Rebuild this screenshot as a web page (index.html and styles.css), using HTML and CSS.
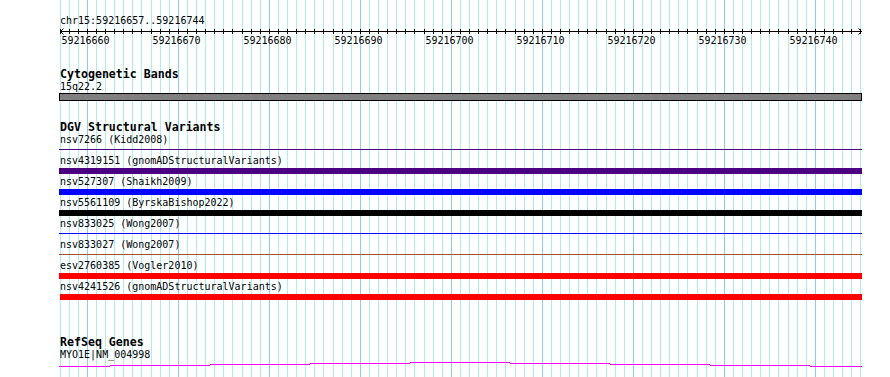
FILE: index.html
```html
<!DOCTYPE html>
<html lang="en">
<head>
<meta charset="utf-8">
<title>chr15:59216657..59216744</title>
<link rel="stylesheet" href="styles.css">
</head>
<body>
<main class="panel">
  <section class="ruler">
    <div class="pos">chr15:59216657..59216744</div>
    <svg class="axis" width="802" height="8" viewBox="0 0 802 8">
      <defs>
        <pattern id="ticks" width="91" height="8" patternUnits="userSpaceOnUse">
          <path d="M0.5 2v5M9.5 2v5M18.5 2v5M27.5 2v5M36.5 2v5M45.5 2v5M54.5 2v5M63.5 2v5M72.5 2v5M81.5 2v5" stroke="#000" stroke-width="1"/>
        </pattern>
      </defs>
      <rect x="0" y="0" width="801" height="8" fill="url(#ticks)"/>
      <path d="M0 4.5H802" stroke="#000" stroke-width="1"/>
      <path d="M3.5 1.5L0.5 4.5L3.5 7.5" fill="none" stroke="#000" stroke-width="1"/>
      <path d="M798.5 1.5L801.5 4.5L798.5 7.5" fill="none" stroke="#000" stroke-width="1"/>
    </svg>
    <div class="ticklabels">
      <span>59216660</span><span>59216670</span><span>59216680</span><span>59216690</span><span>59216700</span><span>59216710</span><span>59216720</span><span>59216730</span><span>59216740</span>
    </div>
  </section>

  <section class="track track-cyto">
    <h2 class="track-title">Cytogenetic Bands</h2>
    <div class="label">15q22.2</div>
    <div class="band"></div>
  </section>

  <section class="track track-dgv">
    <h2 class="track-title">DGV Structural Variants</h2>
    <div class="row"><div class="label">nsv7266 (Kidd2008)</div><div class="glyph"><div class="line c-indigo"></div></div></div>
    <div class="row"><div class="label">nsv4319151 (gnomADStructuralVariants)</div><div class="glyph"><div class="bar c-indigo"></div></div></div>
    <div class="row"><div class="label">nsv527307 (Shaikh2009)</div><div class="glyph"><div class="bar c-blue"></div></div></div>
    <div class="row"><div class="label">nsv5561109 (ByrskaBishop2022)</div><div class="glyph"><div class="bar c-black"></div></div></div>
    <div class="row"><div class="label">nsv833025 (Wong2007)</div><div class="glyph"><div class="line c-blue"></div></div></div>
    <div class="row"><div class="label">nsv833027 (Wong2007)</div><div class="glyph"><div class="line c-sienna"></div></div></div>
    <div class="row"><div class="label">esv2760385 (Vogler2010)</div><div class="glyph"><div class="bar c-red"></div></div></div>
    <div class="row"><div class="label">nsv4241526 (gnomADStructuralVariants)</div><div class="glyph"><div class="bar bar-inset c-red"></div></div></div>
  </section>

  <section class="track track-genes">
    <h2 class="track-title">RefSeq Genes</h2>
    <div class="label">MYO1E|NM_004998</div>
    <svg class="gene" width="803" height="6" viewBox="0 0 803 6">
      <path d="M0 5.5H51M51 4.5H151M151 3.5H251M251 2.5H351M351 1.5H451M451 2.5H551M551 3.5H651M651 4.5H751M751 5.5H803" fill="none" stroke="#ff00ff" stroke-width="1"/>
    </svg>
  </section>
</main>
</body>
</html>
```

FILE: styles.css
```css
html, body {
  margin: 0;
  padding: 0;
  background: #ffffff;
}

body {
  font-family: "DejaVu Sans Mono", "Liberation Mono", monospace;
  font-size: 10px;
  color: #000;
  overflow: hidden;
}

.panel {
  display: block;
  margin-left: 60px;
  width: 802px;
  min-height: 377px;
  box-sizing: border-box;
  padding-top: 15px;
  background-image: linear-gradient(to right,
    #afeeee 0 1px, transparent 1px 9px,
    #afeeee 9px 10px, transparent 10px 18px,
    #afeeee 18px 19px, transparent 19px 27px,
    #87cefa 27px 28px, transparent 28px 36px,
    #afeeee 36px 37px, transparent 37px 45px,
    #afeeee 45px 46px, transparent 46px 54px,
    #afeeee 54px 55px, transparent 55px 63px,
    #afeeee 63px 64px, transparent 64px 72px,
    #afeeee 72px 73px, transparent 73px 81px,
    #afeeee 81px 82px, transparent 82px 91px);
  background-size: 91px 100%;
  background-repeat: repeat-x;
}

.pos,
.label {
  height: 12px;
  line-height: 12px;
  white-space: nowrap;
}

.axis {
  display: block;
}

.ticklabels {
  display: flex;
  margin-left: -20px;
  height: 12px;
  line-height: 12px;
}

.ticklabels span {
  flex: 0 0 91px;
  text-align: center;
}

.track {
  display: block;
}

.track-title {
  margin: 0;
  font-size: 11.6px;
  font-weight: bold;
  height: 14px;
  line-height: 14px;
  white-space: nowrap;
}

.track-cyto {
  margin-top: 20px;
}

.band {
  box-sizing: border-box;
  margin-left: -1px;
  width: 803px;
  height: 8px;
  border: 1px solid #000;
  background: #808080;
}

.track-dgv {
  margin-top: 19px;
}

.row {
  height: 21px;
}

.glyph {
  height: 9px;
}

.bar {
  margin-top: 1px;
  margin-left: -1px;
  width: 803px;
  height: 6px;
}

.bar-inset {
  margin-left: 0;
  width: 802px;
}

.line {
  margin-top: 3px;
  margin-left: -1px;
  width: 803px;
  height: 1px;
}

.c-indigo { background: #4b0082; }
.c-blue { background: #0000ff; }
.c-black { background: #000000; }
.c-red { background: #ff0000; }
.c-sienna { background: #a0522d; }

.track-genes {
  margin-top: 34px;
}

.track-genes .track-title {
  height: 13px;
  line-height: 13px;
}

.gene {
  display: block;
  margin-left: -1px;
}
```
